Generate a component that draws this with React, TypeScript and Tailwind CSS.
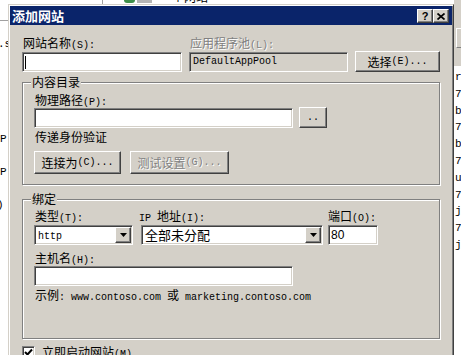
const ASCII_RUN = /([\x00-\x7f]+)/;

const sunken =
  "border border-t-[#808080] border-l-[#808080] border-r-white border-b-white shadow-[inset_1px_1px_0_#404040,inset_-1px_-1px_0_#d4d0c8]";
const raised =
  "border border-t-white border-l-white border-r-[#404040] border-b-[#404040] shadow-[inset_-1px_-1px_0_#808080] bg-[#d4d0c8]";
const etched = "border border-[#808080] shadow-[inset_1px_1px_0_#fff,1px_1px_0_#fff]";
const disabledText = "text-[#808080] [text-shadow:1px_1px_0_#fff]";

// SimSun-ish look: CJK at 12px, ascii as 6px-wide mono
function Txt({ s }: { s: string }) {
  return (
    <>
      {s
        .split(ASCII_RUN)
        .filter(Boolean)
        .map((part, i) =>
          ASCII_RUN.test(part) ? (
            <span key={i} className="font-['Liberation_Mono',monospace] text-[10px]">
              {part}
            </span>
          ) : (
            <span key={i}>{part}</span>
          )
        )}
    </>
  );
}

function Label({ s, className = "" }: { s: string; className?: string }) {
  return (
    <div className={`h-[14px] leading-[14px] whitespace-nowrap ${className}`}>
      <Txt s={s} />
    </div>
  );
}

function Btn({ s, className = "", disabled = false }: { s: string; className?: string; disabled?: boolean }) {
  return (
    <div className={`${raised} flex items-center justify-center whitespace-nowrap ${disabled ? disabledText : ""} ${className}`}>
      <Txt s={s} />
    </div>
  );
}

function DropArrow() {
  return (
    <div className={`${raised} w-[16px] h-full flex items-center justify-center`}>
      <svg width="7" height="4" viewBox="0 0 7 4">
        <polygon points="0,0 7,0 3.5,4" fill="#000" />
      </svg>
    </div>
  );
}

function Combo({ className = "", children }: { className?: string; children: React.ReactNode }) {
  return (
    <div className={`${sunken} bg-white h-[20px] p-px flex items-center ${className}`}>
      <div className="flex-1 pl-[2px] whitespace-nowrap overflow-hidden">{children}</div>
      <DropArrow />
    </div>
  );
}

function GroupBox({ title, className = "", children }: { title: string; className?: string; children: React.ReactNode }) {
  return (
    <div className={`relative ${etched} pl-[11px] ${className}`}>
      <span className="absolute left-[8px] top-[-8px] px-px bg-[#d4d0c8] leading-[14px]">{title}</span>
      {children}
    </div>
  );
}

export default function App() {
  const rightChars = ["r", "7", "b", "7", "b", "7", "u", "7", "j", "7", "j"];

  return (
    <div className="relative w-[461px] h-[355px] overflow-hidden bg-white text-black font-['Noto_Sans_CJK_SC','Liberation_Sans',sans-serif] text-[12px] leading-[14px]">
      {/* window behind the dialog */}
      <div className="absolute left-[102px] top-0 w-px h-[4px] bg-[#a0a0a0]" />
      <div className="absolute left-[124px] top-0 w-[11px] h-[3px] rounded-b-full bg-[#3f8f4a]" />
      <div className="absolute left-[137px] top-0 w-[15px] h-[3px] bg-[#b4b4b4]" />
      <span className="absolute left-[172px] top-[-10px] whitespace-nowrap">个网站</span>
      <div className="absolute left-0 top-[20px] w-[8px] h-px bg-[#a0a0a0]" />
      <span className="absolute left-[-2px] top-[37px] font-['Liberation_Mono',monospace] text-[11px]">.s</span>
      <span className="absolute left-0 top-[132px] font-['Liberation_Mono',monospace] text-[11px]">P</span>
      <span className="absolute left-0 top-[165px] font-['Liberation_Mono',monospace] text-[11px]">P</span>
      <span className="absolute left-[-3px] top-[198px] font-['Liberation_Mono',monospace] text-[11px]">)</span>
      <div className="absolute left-[454px] top-0 w-[7px] h-[66px] bg-[#d4d0c8]">
        <div className="mt-[28px] ml-[2px] h-[20px] border-l border-t border-white border-b border-b-[#808080]" />
      </div>
      <div className="absolute left-[455px] top-[69px] flex flex-col font-['Liberation_Mono',monospace] text-[11px] leading-[16.8px]">
        {rightChars.map((c, i) => (
          <span key={i}>{c}</span>
        ))}
      </div>

      {/* dialog */}
      <div className="absolute left-[8px] top-[4px] w-[446px] h-[400px] bg-[#d4d0c8] border border-t-[#d4d0c8] border-l-[#d4d0c8] border-r-[#404040] border-b-[#404040] shadow-[inset_1px_1px_0_#fff,inset_-1px_-1px_0_#808080] pt-px px-px">
        <div className="h-[19px] bg-[#0a246a] flex items-start pl-[2px] pr-[3px]">
          <span className="mt-[3px] text-white font-bold text-[13px] leading-[14px]">添加网站</span>
          <div className="ml-auto mt-[3px] flex">
            <div className={`${raised} w-[16px] h-[14px] flex items-center justify-center font-['Liberation_Sans',sans-serif] font-bold text-[11px] leading-none`}>
              ?
            </div>
            <div className={`${raised} w-[16px] h-[14px] flex items-center justify-center`}>
              <svg width="8" height="7" viewBox="0 0 8 7">
                <path d="M0.5 0.5 L7.5 6.5 M7.5 0.5 L0.5 6.5" stroke="#000" strokeWidth="1.7" />
              </svg>
            </div>
          </div>
        </div>

        <div className="px-[12px]">
          {/* site name / app pool */}
          <div className="flex items-end pt-[11px]">
            <div className="w-[160px]">
              <Label s="网站名称(S):" className="pl-px" />
              <div className={`${sunken} mt-[2px] h-[20px] bg-white flex items-center pl-[2px]`}>
                <div className="w-px h-[13px] bg-black" />
              </div>
            </div>
            <div className="ml-[7px] w-[159px]">
              <Label s="应用程序池(L):" className={`pl-px ${disabledText}`} />
              <div className={`${sunken} mt-[2px] h-[20px] bg-[#d4d0c8] flex items-center pl-[3px]`}>
                <Txt s="DefaultAppPool" />
              </div>
            </div>
            <Btn s="选择(E)..." className="ml-[7px] w-[85px] h-[21px]" />
          </div>

          {/* content directory */}
          <GroupBox title="内容目录" className="mt-[10px] h-[103px]">
            <Label s="物理路径(P):" className="pt-0 mt-[10px] pl-px" />
            <div className="flex items-end">
              <div className={`${sunken} w-[259px] h-[20px] bg-white`} />
              <Btn s=".." className="ml-[6px] w-[28px] h-[21px]" />
            </div>
            <Label s="传递身份验证" className="mt-[2px] pl-px" />
            <div className="flex mt-[7px]">
              <Btn s="连接为(C)..." className="w-[87px] h-[23px]" />
              <Btn s="测试设置(G)..." disabled className="ml-[9px] w-[99px] h-[23px]" />
            </div>
          </GroupBox>

          {/* binding */}
          <GroupBox title="绑定" className="mt-[14px] h-[140px]">
            <div className="flex mt-[9px]">
              <div className="w-[99px]">
                <Label s="类型(T):" className="pl-px" />
                <Combo className="mt-[2px]">
                  <Txt s="http" />
                </Combo>
              </div>
              <div className="ml-[8px] w-[182px]">
                <Label s="IP 地址(I):" className="ml-[-2px]" />
                <Combo className="mt-[2px]">
                  <span className="text-[13px]">全部未分配</span>
                </Combo>
              </div>
              <div className="ml-[5px] w-[50px]">
                <Label s="端口(O):" />
                <div className={`${sunken} mt-[2px] h-[20px] bg-white flex items-center pl-[2px] font-['Liberation_Sans',sans-serif] text-[12px]`}>
                  80
                </div>
              </div>
            </div>
            <Label s="主机名(H):" className="mt-[6px] pl-px" />
            <div className={`${sunken} mt-px w-[259px] h-[20px] bg-white`} />
            <Label s="示例: www.contoso.com 或 marketing.contoso.com" className="mt-[2px] pl-px" />
          </GroupBox>

          <div className="flex items-center mt-[6px]">
            <div className={`${sunken} w-[13px] h-[13px] bg-white flex items-center justify-center`}>
              <svg width="9" height="9" viewBox="0 0 9 9">
                <polyline points="1,4 3.5,6.5 8,1.5" fill="none" stroke="#000" strokeWidth="2" />
              </svg>
            </div>
            <Label s="立即启动网站(M)" className="ml-[7px]" />
          </div>
        </div>
      </div>
    </div>
  );
}
